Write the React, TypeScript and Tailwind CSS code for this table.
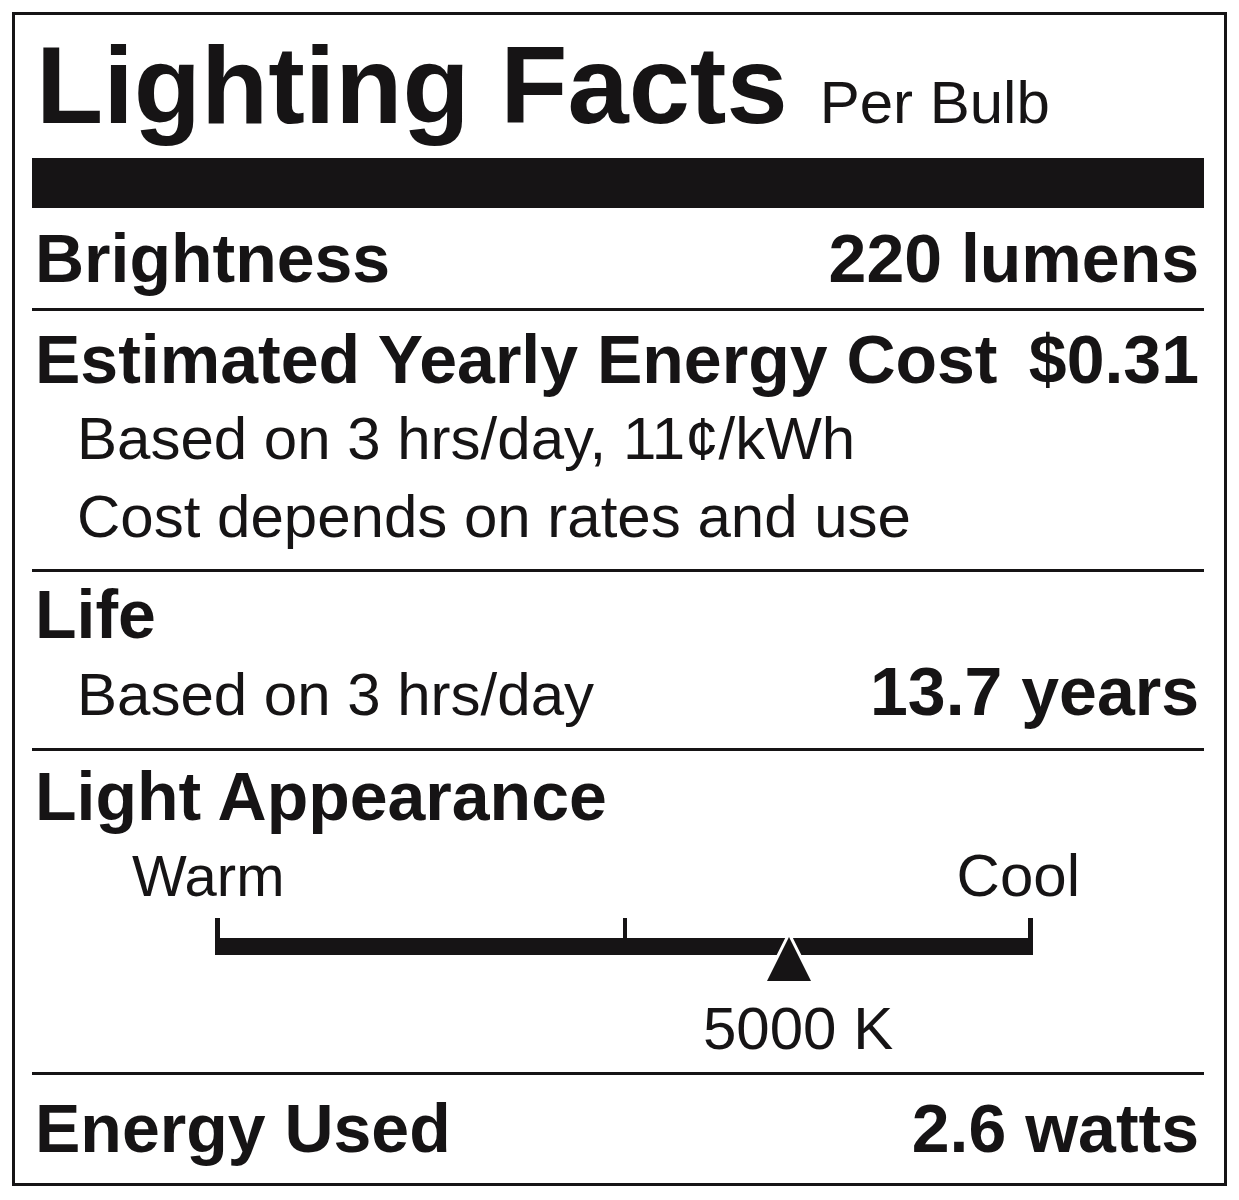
const ink = "#161415";

type Row = { label: string; value: string };

function ValueRow({ label, value }: Row) {
  return (
    <div className="flex items-baseline justify-between text-[68px] font-bold leading-none">
      <span>{label}</span>
      <span>{value}</span>
    </div>
  );
}

function KelvinScale() {
  // ticks at warm end, middle, cool end; marker sits at 5000 K
  return (
    <svg className="mt-[12px] ml-[180px] block" width="818" height="64" viewBox="0 0 818 64">
      <rect x="0" y="20" width="818" height="17" fill={ink} />
      <rect x="0" y="0" width="5" height="37" fill={ink} />
      <rect x="408" y="0" width="4" height="24" fill={ink} />
      <rect x="813" y="0" width="5" height="37" fill={ink} />
      <polygon
        points="574,19 552,63 596,63"
        fill={ink}
        stroke="#fff"
        strokeWidth="6"
        strokeLinejoin="miter"
        style={{ paintOrder: "stroke" }}
      />
    </svg>
  );
}

export default function App() {
  return (
    <div className="min-h-screen bg-white pl-[12px] pt-[12px] font-['Liberation_Sans',Arial,sans-serif] text-[#161415]">
      <div className="w-[1215px] border-[3px] border-[#161415] pt-[15px] pr-[20px] pb-[21px] pl-[17px]">
        <div className="flex items-baseline pl-[4px]">
          <h1 className="text-[110px] font-bold leading-none">Lighting Facts</h1>
          <span className="ml-[32px] text-[60px] leading-none">Per Bulb</span>
        </div>
        <div className="mt-[18px] h-[50px] bg-[#161415]" />

        <section className="border-b-[3px] border-[#161415] pt-[16px] pr-[5px] pb-[16px] pl-[3px]">
          <ValueRow label="Brightness" value="220 lumens" />
        </section>

        <section className="border-b-[3px] border-[#161415] pt-[14px] pr-[5px] pb-[13px] pl-[3px]">
          <ValueRow label="Estimated Yearly Energy Cost" value="$0.31" />
          <div className="mt-[7px] pl-[42px] text-[60px] leading-[78px]">
            <p>Based on 3 hrs/day, 11¢/kWh</p>
            <p>Cost depends on rates and use</p>
          </div>
        </section>

        <section className="border-b-[3px] border-[#161415] pt-[8px] pr-[5px] pb-[23px] pl-[3px]">
          <p className="text-[68px] font-bold leading-none">Life</p>
          <div className="mt-[9px] flex items-baseline justify-between">
            <span className="pl-[42px] text-[60px] leading-none">Based on 3 hrs/day</span>
            <span className="text-[68px] font-bold leading-none">13.7 years</span>
          </div>
        </section>

        <section className="border-b-[3px] border-[#161415] pt-[11px] pr-[5px] pb-[13px] pl-[3px]">
          <p className="text-[68px] font-bold leading-none">Light Appearance</p>
          <div className="mt-[16px] flex items-baseline leading-none">
            <span className="ml-[97px] text-[58px]">Warm</span>
            <span className="mr-[119px] ml-auto text-[60px]">Cool</span>
          </div>
          <KelvinScale />
          <p className="mt-[17px] ml-[668px] text-[60px] leading-none">5000 K</p>
        </section>

        <section className="pt-[19px] pr-[5px] pl-[3px]">
          <ValueRow label="Energy Used" value="2.6 watts" />
        </section>
      </div>
    </div>
  );
}
